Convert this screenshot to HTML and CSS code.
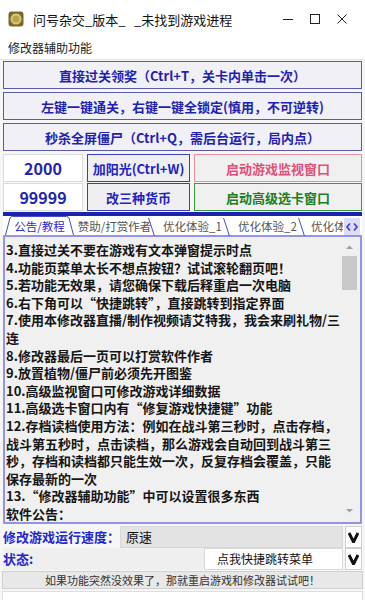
FILE: index.html
```html
<!DOCTYPE html>
<html lang="zh">
<head>
  <meta charset="UTF-8">
  <title>问号杂交_版本_</title>
  <link rel="stylesheet" href="styles.css">
</head>
<body>

<!-- BARRA DE TITULO -->
<div class="titulo">
  <svg class="icono" width="16" height="16" viewBox="0 0 16 16">
    <rect x="0.5" y="0.5" width="15" height="15" rx="3" fill="#7a6a2a"/>
    <circle cx="8" cy="8" r="5.5" fill="#d9c77a"/>
    <circle cx="8" cy="8" r="3.5" fill="#b8a450"/>
  </svg>
  <span class="titulo-nombre">问号杂交_版本_</span>
  <span class="titulo-estado">_未找到游戏进程</span>
  <div class="controles">
    <svg width="12" height="12" viewBox="0 0 12 12"><path d="M1 6.5h10" stroke="#222" stroke-width="1"/></svg>
    <svg width="12" height="12" viewBox="0 0 12 12"><rect x="1.5" y="1.5" width="9" height="9" fill="none" stroke="#222" stroke-width="1"/></svg>
    <svg width="12" height="12" viewBox="0 0 12 12"><path d="M1.5 1.5l9 9M10.5 1.5l-9 9" stroke="#222" stroke-width="1"/></svg>
  </div>
</div>

<div class="menu">修改器辅助功能</div>

<!-- BOTONES -->
<div class="botones">
  <div class="boton">直接过关领奖（Ctrl+T，关卡内单击一次）</div>
  <div class="boton">左键一键通关，右键一键全锁定(慎用，不可逆转)</div>
  <div class="boton">秒杀全屏僵尸（Ctrl+Q，需后台运行，局内点）</div>

  <div class="rejilla">
    <div class="valor">2000</div>
    <div class="accion">加阳光(Ctrl+W)</div>
    <div class="ventana rosa">启动游戏监视窗口</div>
    <div class="valor">99999</div>
    <div class="accion">改三种货币</div>
    <div class="ventana verde">启动高级选卡窗口</div>
  </div>
</div>

<!-- PESTAÑAS -->
<div class="pestanas">
  <div class="tira">
    <span class="pestana activa" style="width: 69px">
      <svg class="contorno" width="69" height="19" viewBox="0 0 69 19">
        <path d="M0.5 19L5 2Q5.5 0.5 7.5 0.5H61.5Q63.5 0.5 64 2L68.5 19" fill="#fff" stroke="#4a4ad0" stroke-width="1"/>
      </svg>
      <span class="etiqueta-pestana">公告/教程</span>
    </span>
    <span class="pestana" style="width: 81px">赞助/打赏作者</span>
    <span class="pestana" style="width: 75px">优化体验_1</span>
    <span class="pestana" style="width: 75px">优化体验_2</span>
    <span class="pestana corta" style="width: 38px">优化体验_</span>
    <span class="flechas">
      <svg width="16" height="12" viewBox="0 0 16 12">
        <path d="M6 2.5l-3 3.5 3 3.5M10 2.5l3 3.5-3 3.5" fill="none" stroke="#3a3ad0" stroke-width="1.6"/>
      </svg>
    </span>
  </div>

  <div class="marco">
    <div class="texto">
      <div>3.直接过关不要在游戏有文本弹窗提示时点</div>
      <div>4.功能页菜单太长不想点按钮？试试滚轮翻页吧！</div>
      <div>5.若功能无效果，请您确保下载后释重启一次电脑</div>
      <div>6.右下角可以“快捷跳转”，直接跳转到指定界面</div>
      <div>7.使用本修改器直播/制作视频请艾特我，我会来刷礼物/三</div>
      <div>连</div>
      <div>8.修改器最后一页可以打赏软件作者</div>
      <div>9.放置植物/僵尸前必须先开图鉴</div>
      <div>10.高级监视窗口可修改游戏详细数据</div>
      <div>11.高级选卡窗口内有“修复游戏快捷键”功能</div>
      <div>12.存档读档使用方法：例如在战斗第三秒时，点击存档，</div>
      <div>战斗第五秒时，点击读档，那么游戏会自动回到战斗第三</div>
      <div>秒，存档和读档都只能生效一次，反复存档会覆盖，只能</div>
      <div>保存最新的一次</div>
      <div>13.“修改器辅助功能”中可以设置很多东西</div>
      <div>软件公告：</div>
    </div>
    <div class="barra">
      <svg width="9" height="6" viewBox="0 0 9 6"><path d="M1 5l3.5-3.5L8 5z" fill="#a0a0a0"/></svg>
      <div class="pulgar"></div>
      <svg class="abajo" width="9" height="6" viewBox="0 0 9 6"><path d="M1 1l3.5 3.5L8 1z" fill="#a0a0a0"/></svg>
    </div>
  </div>
</div>

<!-- PIE -->
<div class="fila primera">
  <div class="etiqueta">修改游戏运行速度：</div>
  <div class="combo gris">原速</div>
  <div class="flecha"><svg width="11" height="12" viewBox="0 0 11 12"><path d="M1 2l4.5 9 4.5-9" fill="none" stroke="#111" stroke-width="3"/></svg></div>
</div>
<div class="fila">
  <div class="etiqueta estado">状态:</div>
  <div class="combo blanco">点我快捷跳转菜单</div>
  <div class="flecha"><svg width="11" height="12" viewBox="0 0 11 12"><path d="M1 2l4.5 9 4.5-9" fill="none" stroke="#111" stroke-width="3"/></svg></div>
</div>
<div class="aviso">如果功能突然没效果了，那就重启游戏和修改器试试吧！</div>
<div class="final"></div>

</body>
</html>
```

FILE: styles.css
```css
html, body {
  margin: 0;
  padding: 0;
  background: #f6f6f6;
  font-family: "Noto Sans CJK SC", "Noto Sans", sans-serif;
  color: #111;
  overflow: hidden;
}

/* TITULO */
.titulo {
  height: 38px;
  background: #fff;
  display: flex;
  align-items: center;
  padding-left: 8px;
  font-size: 13px;
}

.icono {
  margin-right: 9px;
}

.titulo-nombre {
  width: 101px;
}

.controles {
  margin-left: auto;
  display: flex;
  gap: 15px;
  padding-right: 17px;
}

.menu {
  height: 21px;
  background: #fff;
  font-size: 12px;
  line-height: 20px;
  padding-left: 8px;
  color: #222;
  border-bottom: 1px solid #e4e4e4;
}

/* BOTONES */
.botones {
  padding: 1px 3px 0 3px;
  display: flex;
  flex-direction: column;
  gap: 3px;
}

.boton {
  height: 26px;
  border: 1px solid #5a5aa8;
  background: #f0f0f6;
  color: #1f1fb4;
  font-weight: bold;
  font-size: 13px;
  display: flex;
  align-items: center;
  justify-content: center;
}

.rejilla {
  display: grid;
  grid-template-columns: 80px 103px 1fr;
  grid-auto-rows: 28px;
  column-gap: 4px;
  row-gap: 1px;
}

.valor, .accion, .ventana {
  display: flex;
  align-items: center;
  justify-content: center;
  font-weight: bold;
  box-sizing: border-box;
}

.valor {
  background: #fff;
  border: 1px solid #dcdcdc;
  color: #2424b0;
  font-size: 16px;
}

.accion {
  background: #efeff2;
  border: 1px solid #3c3cc0;
  color: #2424c0;
  font-size: 13px;
}

.ventana {
  background: #f0f0f0;
  font-size: 13px;
}

.rosa {
  border: 1px solid #e890a0;
  color: #e0507a;
}

.verde {
  border: 1px solid #3a9a3a;
  color: #1e7e1e;
}

/* PESTAÑAS */
.pestanas {
  margin: 1px 3px 0 3px;
  border-top: 4px solid #1a22b0;
}

.tira {
  height: 19px;
  display: flex;
  align-items: flex-end;
  padding-left: 2px;
  font-size: 11.5px;
  background: #fff;
}

.pestana {
  position: relative;
  flex: none;
  box-sizing: border-box;
  height: 17px;
  line-height: 17px;
  text-align: center;
  color: #555;
  white-space: nowrap;
}

.pestana::after {
  content: "";
  position: absolute;
  right: 3px;
  top: 0;
  height: 18px;
  border-right: 1px solid #4a4ad0;
  transform: skewX(18deg);
}

.activa {
  color: #2a2ad0;
  height: 19px;
  line-height: 20px;
}

.activa::after {
  display: none;
}

.contorno {
  position: absolute;
  left: 0;
  top: 0;
}

.etiqueta-pestana {
  position: relative;
}

.corta {
  overflow: hidden;
  text-align: left;
  padding-left: 6px;
}

.corta::after {
  display: none;
}

.flechas {
  height: 17px;
  display: flex;
  align-items: center;
  background: #dcdcf4;
  margin-left: 1px;
}

.marco {
  height: 285px;
  border: 2px solid #9494e2;
  background: #f0f0f0;
  display: flex;
  overflow: hidden;
}

.texto {
  flex: 1;
  font-size: 13px;
  font-weight: bold;
  line-height: 17.6px;
  padding: 4px 0 0 1px;
  color: #151515;
  white-space: nowrap;
  overflow: hidden;
}

.barra {
  width: 17px;
  display: flex;
  flex-direction: column;
  align-items: center;
  padding-top: 7px;
  margin-right: 2px;
}

.pulgar {
  width: 15px;
  height: 34px;
  background: #c8c8c8;
  margin-top: 6px;
}

.abajo {
  margin-top: auto;
  margin-bottom: 8px;
}

/* PIE */
.fila {
  display: flex;
  height: 22px;
  margin: 0 3px;
}

.primera {
  margin-top: 2px;
}

.etiqueta {
  width: 117px;
  color: #2626d0;
  font-weight: bold;
  font-size: 13px;
  line-height: 22px;
}

.estado {
  width: 201px;
  background: #efefef;
}

.combo {
  flex: 1;
  font-size: 13px;
  line-height: 20px;
  padding-left: 5px;
  border: 1px solid #d8d8d8;
  box-sizing: border-box;
}

.gris {
  background: #e3e3e3;
}

.blanco {
  background: #fff;
  font-size: 12px;
  padding-left: 12px;
}

.flecha {
  width: 15px;
  margin-left: 2px;
  background: #fff;
  border: 1px solid #cfcfcf;
  display: flex;
  align-items: center;
  justify-content: center;
}

.aviso {
  margin: 1px 2px 0 2px;
  height: 16px;
  line-height: 16px;
  font-size: 11px;
  text-align: center;
  color: #333;
  background: #e8e8e8;
  border: 1px solid #d0d0d0;
}

.final {
  margin: 2px 2px 0 2px;
  height: 10px;
  background: #fff;
  border: 1px solid #dedede;
}
```
